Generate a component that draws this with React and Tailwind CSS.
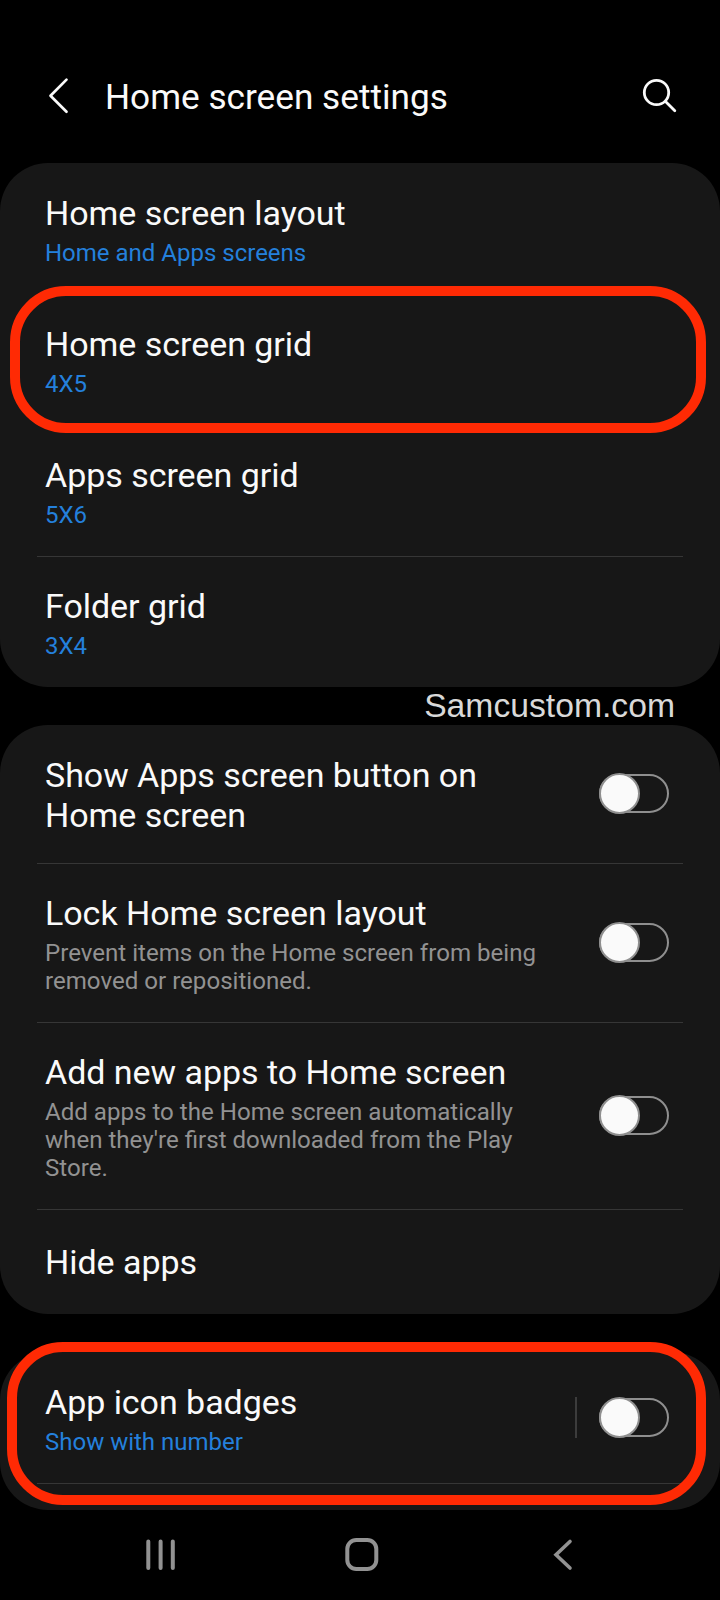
import React, { useState } from 'react';

const layoutItems = [
  { id: 'layout', title: 'Home screen layout', value: 'Home and Apps screens' },
  { id: 'home-grid', title: 'Home screen grid', value: '4X5', highlighted: true },
  { id: 'apps-grid', title: 'Apps screen grid', value: '5X6' },
  { id: 'folder-grid', title: 'Folder grid', value: '3X4' },
];

function Toggle({ checked, onChange }) {
  return (
    <button
      type="button"
      role="switch"
      aria-checked={checked}
      onClick={onChange}
      className="relative mb-[2px] h-[41px] w-[70px] shrink-0"
    >
      <span className="absolute inset-x-0 top-[1px] bottom-[1px] rounded-full border-2 border-[#8f8f8f]" />
      <span
        className={
          checked
            ? 'absolute right-0 top-0 h-[41px] w-[41px] rounded-full border-2 border-[#8f8f8f] bg-[#fafafa]'
            : 'absolute left-0 top-0 h-[41px] w-[41px] rounded-full border-2 border-[#8f8f8f] bg-[#fafafa]'
        }
      />
    </button>
  );
}

function Divider() {
  return <div className="mx-[37px] -mt-px h-px bg-[#363636]" />;
}

function RowText({ title, value, description }) {
  return (
    <div className="w-[500px]">
      <h2 className="text-[34px] leading-[40px] tracking-[-0.04px] text-[#fafafa]">{title}</h2>
      {value && <p className="mt-[6px] text-[24px] leading-[28px] text-[#2480dc]">{value}</p>}
      {description && <p className="mt-[6px] text-[24.1px] leading-[28px] text-[#929292]">{description}</p>}
    </div>
  );
}

export default function App() {
  const [settings, setSettings] = useState({ button: false, lock: false, add: false, badges: false });

  const toggle = (name) => {
    setSettings({ ...settings, [name]: !settings[name] });
  };

  return (
    <div className="flex h-[1600px] w-[720px] flex-col overflow-hidden bg-black font-['Roboto',sans-serif]">
      <header className="flex h-[163px] shrink-0 items-center pt-[28px] pr-[42px] pl-[45px]">
        <svg width="24" height="40" viewBox="0 0 24 40" fill="none" stroke="#fafafa" strokeWidth="2.7" strokeLinecap="round" strokeLinejoin="round">
          <path d="M21.5 3.6 L5.5 19.7 L21.5 35.8" />
        </svg>
        <h1 className="ml-[36px] flex-1 pt-[3px] text-[35.2px] leading-[42px] text-[#fafafa]">Home screen settings</h1>
        <svg width="36" height="36" viewBox="0 0 36 36" fill="none" stroke="#fafafa" strokeWidth="2.8" strokeLinecap="round">
          <circle cx="14.5" cy="14.5" r="12.2" />
          <path d="M23.5 23.5 L32.8 32.8" />
        </svg>
      </header>

      <section className="h-[524px] shrink-0 rounded-[48px] bg-[#171717]">
        {layoutItems.map((item, i) => (
          <div key={item.id} className="relative h-[131px]">
            <div className="h-[131px] px-[45px] pt-[30px]">
              <RowText title={item.title} value={item.value} />
            </div>
            {i === 2 && <div className="mx-[37px] h-px bg-[#363636]" />}
            {item.highlighted && (
              <div className="absolute -top-[8px] left-[10px] h-[147px] w-[696px] rounded-[56px] border-[10px] border-[#ff2a04]" />
            )}
          </div>
        ))}
      </section>

      <div className="flex h-[38px] shrink-0 justify-end pr-[45px] font-['Liberation_Sans',sans-serif] text-[33.7px] leading-[36px] text-[#d9d9d9]">
        Samcustom.com
      </div>

      <section className="h-[589px] shrink-0 rounded-[48px] bg-[#171717]">
        <div className="flex h-[139px] items-center justify-between pr-[51px] pl-[45px]">
          <RowText title="Show Apps screen button on Home screen" />
          <Toggle checked={settings.button} onChange={() => toggle('button')} />
        </div>
        <Divider />
        <div className="flex h-[159px] items-center justify-between pr-[51px] pl-[45px]">
          <RowText
            title="Lock Home screen layout"
            description="Prevent items on the Home screen from being removed or repositioned."
          />
          <Toggle checked={settings.lock} onChange={() => toggle('lock')} />
        </div>
        <Divider />
        <div className="flex h-[187px] items-center justify-between pr-[51px] pl-[45px]">
          <RowText
            title="Add new apps to Home screen"
            description="Add apps to the Home screen automatically when they're first downloaded from the Play Store."
          />
          <Toggle checked={settings.add} onChange={() => toggle('add')} />
        </div>
        <Divider />
        <div className="flex h-[104px] items-center px-[45px]">
          <RowText title="Hide apps" />
        </div>
      </section>

      <section className="relative mt-[38px] h-[158px] shrink-0 rounded-[48px] bg-[#171717]">
        <div className="flex h-[132px] items-center pr-[51px] pl-[45px]">
          <div className="pt-[2px]">
            <RowText title="App icon badges" value="Show with number" />
          </div>
          <div className="mr-[22px] mb-[2px] ml-auto h-[41px] w-[2px] bg-[#3c3c3c]" />
          <Toggle checked={settings.badges} onChange={() => toggle('badges')} />
        </div>
        <Divider />
        <div className="absolute -top-[10px] left-[7px] h-[163px] w-[699px] rounded-[56px] border-[10px] border-[#ff2a04]" />
      </section>

      {/* navigation bar */}
      <nav className="flex h-[90px] shrink-0 items-center justify-between pr-[145px] pl-[144px]">
        <svg width="34" height="36" viewBox="0 0 34 36" stroke="#929292" strokeWidth="4" strokeLinecap="round">
          <path d="M4.3 4.5 V31 M16.6 4.5 V31 M28.8 4.5 V31" />
        </svg>
        <svg className="mr-[6px]" width="36" height="36" viewBox="0 0 36 36" fill="none" stroke="#929292" strokeWidth="4">
          <rect x="3.3" y="3" width="29" height="29" rx="9" />
        </svg>
        <svg width="24" height="36" viewBox="0 0 24 36" fill="none" stroke="#929292" strokeWidth="3.6" strokeLinecap="round">
          <path d="M19 4.5 L5 17.7 L19 31" />
        </svg>
      </nav>
    </div>
  );
}
